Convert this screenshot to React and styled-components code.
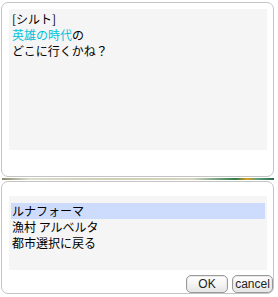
import styled, { createGlobalStyle } from "styled-components";

const Global = createGlobalStyle`
  html, body {
    margin: 0;
    padding: 0;
    background: #ffffff;
  }
  body {
    width: 278px;
    height: 297px;
    overflow: hidden;
    font-family: "Noto Sans CJK JP", "Liberation Sans", sans-serif;
    font-size: 12px;
    color: #000;
  }
`;

const Screen = styled.div`
  display: flex;
  flex-direction: column;
  width: 278px;
  padding: 2px 4px 0 1px;
  box-sizing: border-box;
`;

const Window = styled.div`
  display: flex;
  flex-direction: column;
  height: ${(p) => p.h}px;
  border: 1px solid #c4c4c4;
  border-radius: 7px;
  background: #fff;
  padding: ${(p) => p.pad};
  box-sizing: border-box;
`;

const Divider = styled.div`
  height: 2px;
  margin: 1px 0 1px 1px;
  background: linear-gradient(
    to right,
    #8a8a70 0%,
    #dcdccc 10%,
    #cfcfb4 40%,
    #d6d6c0 70%,
    #2f7a4a 86%,
    #d9a020 90%,
    #5aa080 94%,
    #2f6a4a 100%
  );
`;

const MessageBox = styled.div`
  flex: 0 0 141px;
  background: #f5f5f5;
  padding: 2px 3px;
  box-sizing: border-box;
  line-height: 16px;
`;

const Line = styled.div`
  white-space: nowrap;
`;

const Keyword = styled.span`
  color: #00c4dc;
`;

const ListBox = styled.div`
  flex: 0 0 74px;
  background: #f5f5f5;
  padding: 7px 2px;
  box-sizing: border-box;
  line-height: 16px;
  margin-top: 14px;
`;

const Option = styled.div`
  padding-left: 1px;
  background: ${(p) => (p.selected ? "#cddcfd" : "transparent")};
  white-space: nowrap;
`;

const Buttons = styled.div`
  display: flex;
  justify-content: flex-end;
  gap: 4px;
  margin-top: 5px;
  margin-right: -6px;
`;

const Button = styled.button`
  width: ${(p) => p.w}px;
  height: 18px;
  padding: 0;
  font-family: "Liberation Sans", "DejaVu Sans", sans-serif;
  font-size: 12px;
  color: #222;
  background: linear-gradient(to bottom, #ffffff 0%, #f2f2f2 60%, #e4e4e4 100%);
  border: 1px solid #9a9a9a;
  border-radius: 5px;
  box-shadow: inset 0 0 0 1px #e8e8e8;
`;

export default function App() {
  return (
    <>
      <Global />
      <Screen>
        <Window h={175} pad="6px 6px 0 7px">
          <MessageBox>
            <Line>[シルト]</Line>
            <Line>
              <Keyword>英雄の時代</Keyword>の
            </Line>
            <Line>どこに行くかね？</Line>
          </MessageBox>
        </Window>
        <Divider />
        <Window h={113} pad="0 6px 0 7px">
          <ListBox>
            <Option selected>ルナフォーマ</Option>
            <Option>漁村 アルベルタ</Option>
            <Option>都市選択に戻る</Option>
          </ListBox>
          <Buttons>
            <Button w={42}>OK</Button>
            <Button w={41}>cancel</Button>
          </Buttons>
        </Window>
      </Screen>
    </>
  );
}
